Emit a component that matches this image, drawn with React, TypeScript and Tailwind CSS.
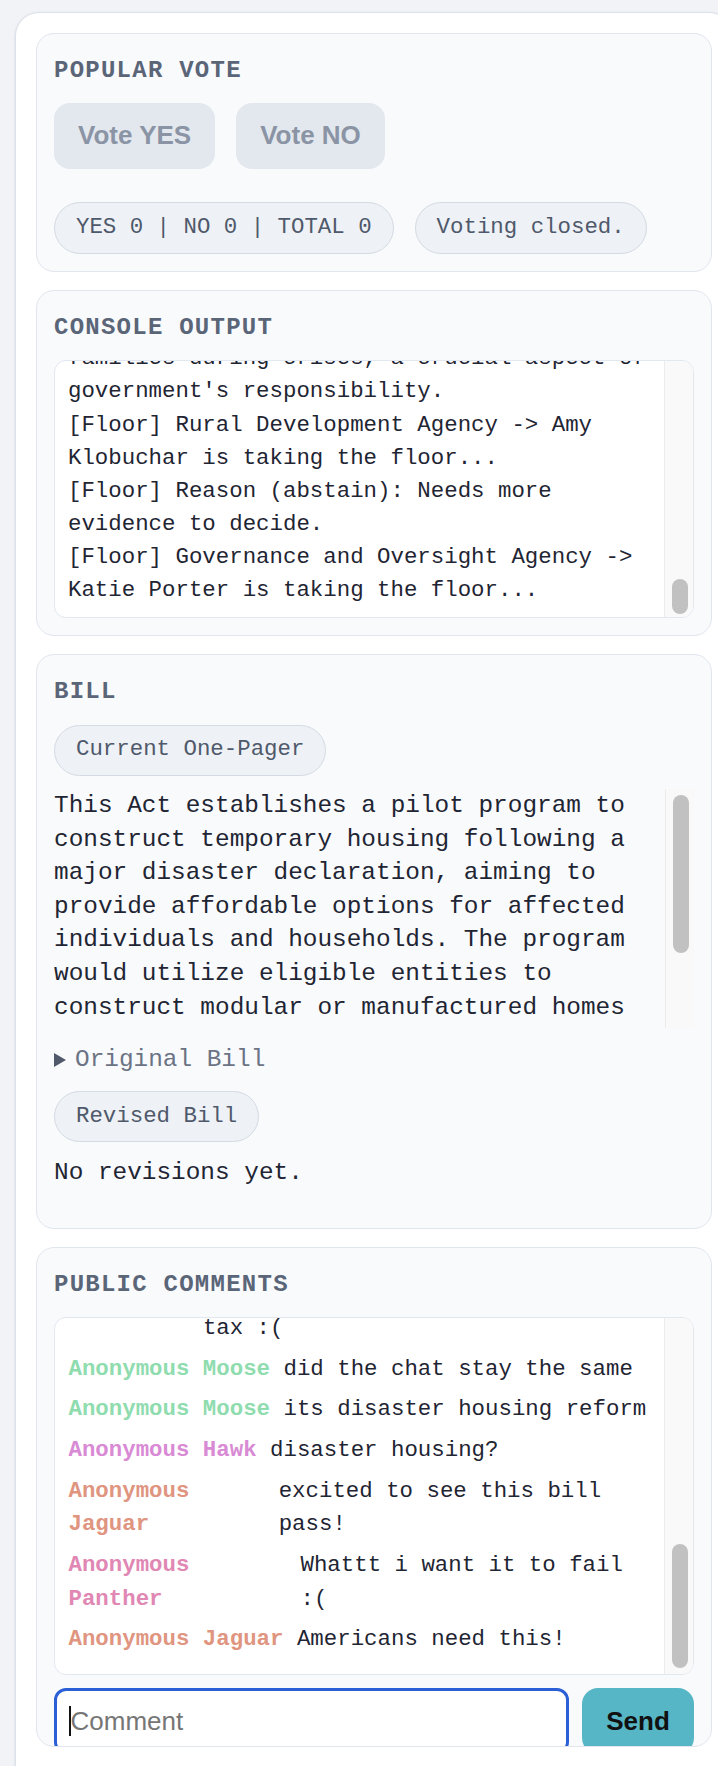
import React from "react";

const mono = "font-['Liberation_Mono',monospace]";
const sans = "font-['Liberation_Sans',Arial,sans-serif]";

const consoleEntries = [
  "[Floor] Governance and Oversight Agency -> Katie Porter is taking the floor...",
  "[Floor] Reason (yes): Strengthens accountability for how disaster funds are spent.",
  "[Floor] Housing Agency -> Maxine Waters is taking the floor...",
  "[Floor] Reason (yes): Provides temporary housing to displaced disaster-affected families during crises, a crucial aspect of government's responsibility.",
  "[Floor] Rural Development Agency -> Amy Klobuchar is taking the floor...",
  "[Floor] Reason (abstain): Needs more evidence to decide.",
  "[Floor] Governance and Oversight Agency -> Katie Porter is taking the floor...",
];

const comments = [
  {
    name: "Anonymous Falcon",
    color: "text-[#7fb2df]",
    text: "honestly this just sounds like a way to raise everyone's property tax :(",
  },
  { name: "Anonymous Moose", color: "text-[#8fdcaf]", text: "did the chat stay the same" },
  { name: "Anonymous Moose", color: "text-[#8fdcaf]", text: "its disaster housing reform" },
  { name: "Anonymous Hawk", color: "text-[#d98ad4]", text: "disaster housing?" },
  { name: "Anonymous Jaguar", color: "text-[#df957f]", text: "excited to see this bill pass!" },
  { name: "Anonymous Panther", color: "text-[#e087b4]", text: "Whattt i want it to fail :(" },
  { name: "Anonymous Jaguar", color: "text-[#df957f]", text: "Americans need this!" },
];

const billText =
  "This Act establishes a pilot program to construct temporary housing following a major disaster declaration, aiming to provide affordable options for affected individuals and households. The program would utilize eligible entities to construct modular or manufactured homes on public or private land, with priority given to low-income households and those with disabilities. Homes would be transferred to occupants or local housing authorities after the emergency period ends.";

const Heading: React.FC<{ children: React.ReactNode }> = ({ children }) => (
  <div className="text-[24px] leading-[33.6px] font-bold tracking-[1.25px] text-[#5b6578] uppercase">
    {children}
  </div>
);

const Pill: React.FC<{ children: React.ReactNode; className?: string }> = ({
  children,
  className = "",
}) => (
  <div
    className={`h-[51px] px-[21px] flex items-center rounded-full bg-[#eef1f5] border-[1.5px] border-[#d5dbe4] text-[22.4px] text-[#4f596b] whitespace-nowrap ${className}`}
  >
    {children}
  </div>
);

const Card: React.FC<{ children: React.ReactNode; className?: string }> = ({
  children,
  className = "",
}) => (
  <section
    className={`bg-[#f8fafc] border border-[#e1e6ee] rounded-[18px] pt-[20px] px-[17px] ${className}`}
  >
    {children}
  </section>
);

const Track: React.FC<{ className?: string; thumb: string }> = ({ className = "", thumb }) => (
  <div
    className={`w-[29px] shrink-0 bg-[#f9f9f9] border-l border-[#ececec] flex flex-col pl-[7px] ${className}`}
  >
    <div className={`w-[16px] rounded-full bg-[#c1c1c1] ${thumb}`} />
  </div>
);

export default function App() {
  return (
    <div className={`w-[718px] h-[1766px] overflow-hidden bg-[#f1f3f6] pt-[12px] pl-[15px] ${mono}`}>
      <div className="w-[718px] h-[1790px] bg-white border border-[#dce2ea] rounded-[24px] p-[20px] shadow-sm flex flex-col gap-[18px]">
        {/* Popular vote */}
        <Card className="pb-[17px]">
          <Heading>Popular Vote</Heading>
          <div className={`mt-[15px] flex gap-[21px] ${sans}`}>
            <button className="h-[66px] px-[24px] rounded-[16px] bg-[#e3e8ee] text-[#8a94a5] text-[26px] font-bold">
              Vote YES
            </button>
            <button className="h-[66px] px-[24px] rounded-[16px] bg-[#e3e8ee] text-[#8a94a5] text-[26px] font-bold">
              Vote NO
            </button>
          </div>
          <div className="mt-[33px] flex gap-[21px]">
            <Pill className="h-[52px]">YES 0 | NO 0 | TOTAL 0</Pill>
            <Pill className="h-[52px]">Voting closed.</Pill>
          </div>
        </Card>

        {/* Console output */}
        <Card className="pb-[17px]">
          <Heading>Console Output</Heading>
          <div className="mt-[15.5px] h-[258px] bg-white border border-[#e2e8f0] rounded-[12px] flex overflow-hidden">
            <div className="flex-1 min-w-0 overflow-hidden pl-[13px] pb-[9.6px] flex flex-col justify-end">
              <div className="w-[595px] text-[22.4px] leading-[33.1px] text-[#1f2533]">
                {consoleEntries.map((line, i) => (
                  <div key={i}>{line}</div>
                ))}
              </div>
            </div>
            <Track className="justify-end pb-[3px]" thumb="h-[35px]" />
          </div>
        </Card>

        {/* Bill */}
        <Card className="pb-[38px]">
          <Heading>Bill</Heading>
          <div className="mt-[16.4px] flex">
            <Pill>Current One-Pager</Pill>
          </div>
          <div className="mt-[13.3px] h-[239px] flex">
            <div className="flex-1 min-w-0 overflow-hidden text-[24.4px] leading-[33.6px] text-[#1f2533]">
              {billText}
            </div>
            <Track className="pt-[6px]" thumb="h-[158px]" />
          </div>
          <div className="mt-[15.7px] flex items-center h-[33.6px] text-[24.4px] text-[#6b7384]">
            <svg width="12" height="14" viewBox="0 0 12 14" className="shrink-0">
              <path d="M0 0 L12 7 L0 14 Z" fill="#505a6b" />
            </svg>
            <span className="ml-[9px]">Original Bill</span>
          </div>
          <div className="mt-[14px] flex">
            <Pill className="h-[50.5px]">Revised Bill</Pill>
          </div>
          <p className="mt-[14px] text-[24.4px] leading-[33.6px] text-[#1f2533]">No revisions yet.</p>
        </Card>

        {/* Public comments */}
        <Card className="h-[500px] shrink-0 overflow-hidden">
          <Heading>Public Comments</Heading>
          <div className="mt-[15.6px] h-[357.5px] bg-white border border-[#e2e8f0] rounded-[12px] flex overflow-hidden">
            <div className="flex-1 min-w-0 overflow-hidden pl-[13.5px] pr-[16.5px] pb-[16.7px] flex flex-col justify-end gap-[7.4px] text-[22.4px] leading-[33.4px]">
              {comments.map((c, i) => (
                <div key={i} className="flex items-start gap-[13.44px]">
                  <span className={`font-bold ${c.color}`}>{c.name}</span>
                  <span className="text-[#1f2533]">{c.text}</span>
                </div>
              ))}
            </div>
            <Track className="justify-end pb-[6px]" thumb="h-[124px]" />
          </div>
          <div className={`mt-[13.6px] flex gap-[12.7px] ${sans}`}>
            <div className="flex-1 h-[66px] rounded-[12px] border-[3px] border-[#2b5fd6] bg-white flex items-center pl-[12px]">
              <span className="w-[1.5px] h-[30px] bg-[#111]" />
              <span className="text-[26px] text-[#767676]">Comment</span>
            </div>
            <button className="w-[112px] h-[66px] rounded-[16px] bg-[#56b6c6] text-[#111] text-[26px] font-bold">
              Send
            </button>
          </div>
        </Card>
      </div>
    </div>
  );
}
